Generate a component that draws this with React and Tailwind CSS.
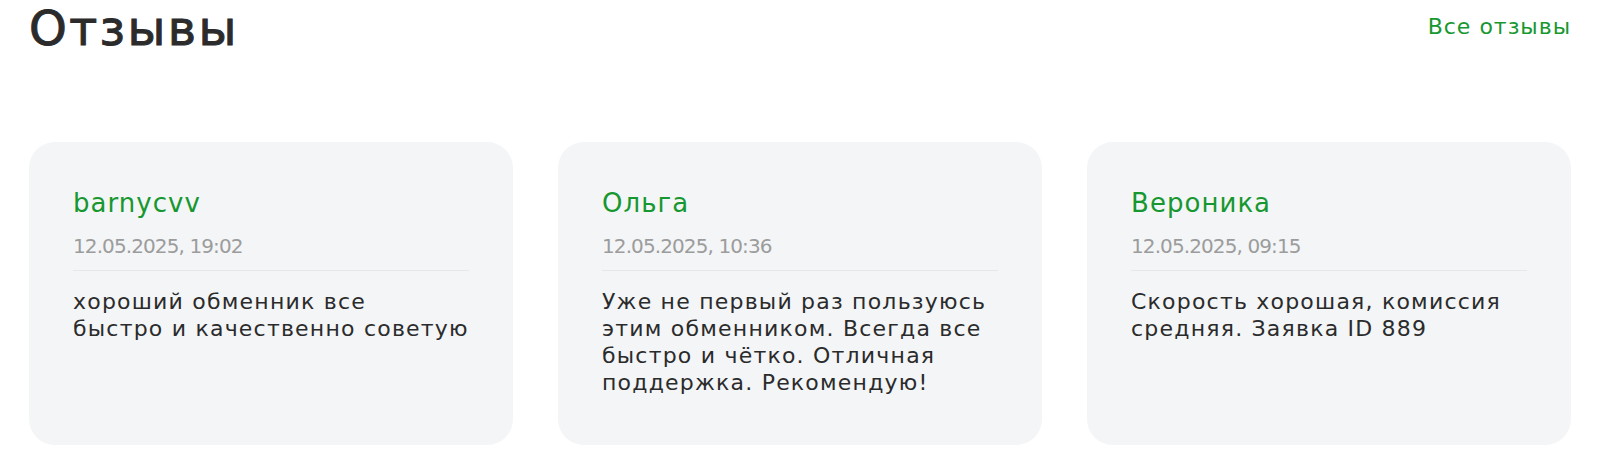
const reviews = [
  {
    id: 1,
    name: "barnycvv",
    date: "12.05.2025, 19:02",
    lines: ["хороший обменник все", "быстро и качественно советую"],
  },
  {
    id: 2,
    name: "Ольга",
    date: "12.05.2025, 10:36",
    lines: [
      "Уже не первый раз пользуюсь",
      "этим обменником. Всегда все",
      "быстро и чётко. Отличная",
      "поддержка. Рекомендую!",
    ],
  },
  {
    id: 3,
    name: "Вероника",
    date: "12.05.2025, 09:15",
    lines: ["Скорость хорошая, комиссия", "средняя. Заявка ID 889"],
  },
];

const ReviewCard = ({ review }) => (
  <div className="h-[303px] rounded-[26px] bg-[#f3f5f7] px-[44px] pt-[45px]">
    <div className="text-[26px] leading-[32px] tracking-[0.04em] text-[#17972f]">{review.name}</div>
    <div className="mt-[14px] pb-[11px] text-[20px] leading-[26px] tracking-[-0.045em] text-[#9c9c9c] border-b border-[#e5e8eb]">
      {review.date}
    </div>
    <p className="mt-[17px] text-[22px] leading-[27px] tracking-[0.055em] text-[#2b2b2b]">
      {review.lines.map((line) => (
        <span key={line} className="block whitespace-nowrap">
          {line}
        </span>
      ))}
    </p>
  </div>
);

export default function App() {
  return (
    <div className="h-[452px] overflow-hidden bg-white px-[29px] pt-[4px] font-['DejaVu_Sans',sans-serif]">
      <div className="flex items-start justify-between">
        <h2 className="text-[48px] leading-[48px] tracking-[0.05em] text-[#2b2b2b] [-webkit-text-stroke:1px_#2b2b2b]">
          Отзывы
        </h2>
        <a href="#" className="mt-[8px] text-[22px] leading-[30px] tracking-[0.045em] text-[#17972f]">
          Все отзывы
        </a>
      </div>
      <div className="mt-[90px] grid grid-cols-3 gap-[45px]">
        {reviews.map((r) => (
          <ReviewCard key={r.id} review={r} />
        ))}
      </div>
    </div>
  );
}
